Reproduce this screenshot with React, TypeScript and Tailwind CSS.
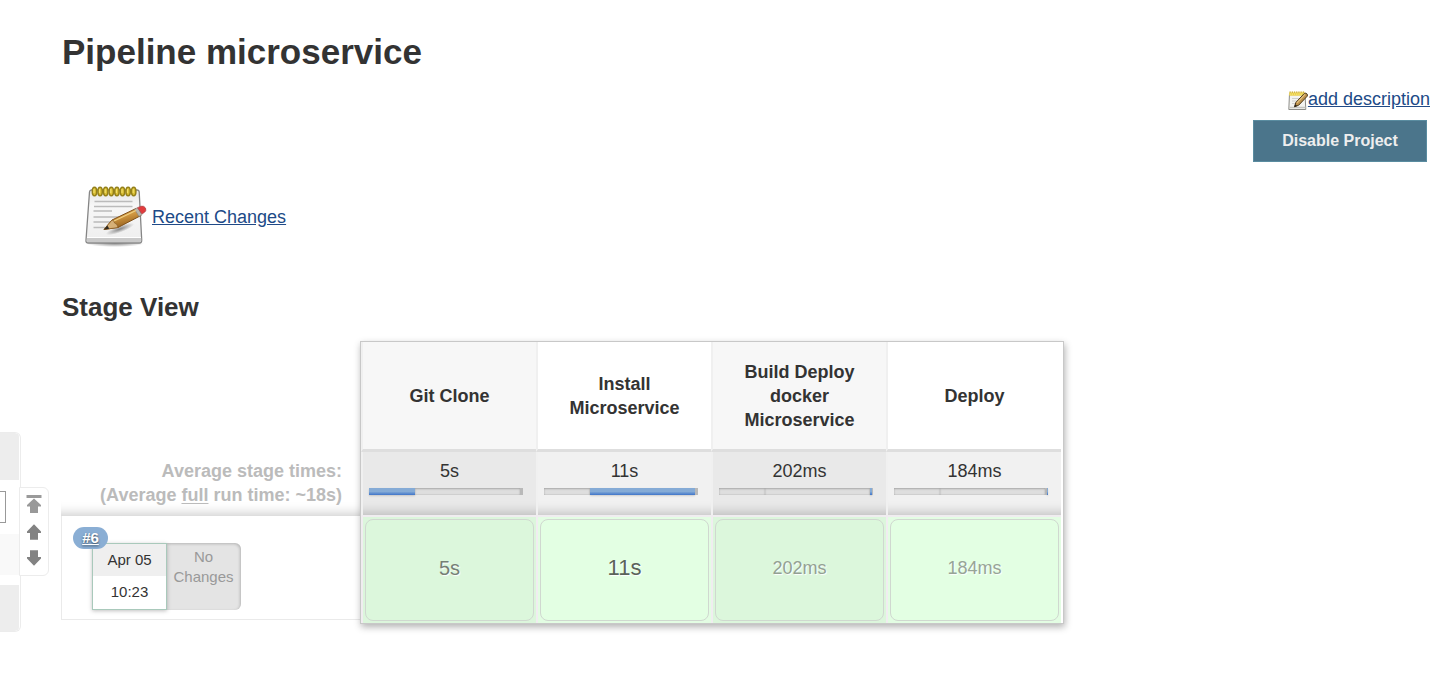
import React from "react";

type Segment = { width: number; kind: "track" | "active" | "cap" };

type Stage = {
  name: string;
  average: string;
  duration: string;
  segments: Segment[];
  durationClass: string;
};

const stages: Stage[] = [
  {
    name: "Git Clone",
    average: "5s",
    duration: "5s",
    durationClass: "text-[20px] text-[#768076]",
    segments: [
      { width: 46, kind: "active" },
      { width: 105, kind: "track" },
      { width: 3, kind: "cap" },
    ],
  },
  {
    name: "Install Microservice",
    average: "11s",
    duration: "11s",
    durationClass: "text-[22px] text-[#5a635a]",
    segments: [
      { width: 46, kind: "track" },
      { width: 105, kind: "active" },
      { width: 3, kind: "cap" },
    ],
  },
  {
    name: "Build Deploy docker Microservice",
    average: "202ms",
    duration: "202ms",
    durationClass: "text-lg text-[#93a093]",
    segments: [
      { width: 46, kind: "track" },
      { width: 105, kind: "track" },
      { width: 2, kind: "active" },
      { width: 1, kind: "cap" },
    ],
  },
  {
    name: "Deploy",
    average: "184ms",
    duration: "184ms",
    durationClass: "text-lg text-[#97a497]",
    segments: [
      { width: 46, kind: "track" },
      { width: 105, kind: "track" },
      { width: 2, kind: "cap" },
      { width: 1, kind: "active" },
    ],
  },
];

const segmentClass = {
  track: "bg-[#dedede] shadow-[inset_0_1px_2px_rgba(0,0,0,0.25),inset_0_-1px_1px_rgba(0,0,0,0.06)]",
  active: "bg-linear-to-b from-[#85abd6] from-50% to-[#3f74c8] shadow-[0_1px_2px_rgba(0,0,0,0.15)]",
  cap: "bg-[#b9b9b9]",
};

function NotepadIcon({ className }: { className: string }) {
  const rings = [0, 1, 2, 3, 4, 5, 6, 7];
  return (
    <svg viewBox="0 0 64 64" className={className} aria-hidden="true">
      <defs>
        <linearGradient id="paper" x1="0" y1="0" x2="0" y2="1">
          <stop offset="0" stopColor="#e6e6e6" />
          <stop offset="0.3" stopColor="#f7f7f7" />
          <stop offset="1" stopColor="#eeeeee" />
        </linearGradient>
        <linearGradient id="wood" x1="0" y1="0" x2="0.4" y2="1">
          <stop offset="0" stopColor="#e5b757" />
          <stop offset="0.5" stopColor="#cf9640" />
          <stop offset="1" stopColor="#8f5b1a" />
        </linearGradient>
        <radialGradient id="shade">
          <stop offset="0" stopColor="#000" stopOpacity="0.45" />
          <stop offset="1" stopColor="#000" stopOpacity="0" />
        </radialGradient>
      </defs>
      <ellipse cx="31" cy="58.5" rx="29" ry="3.5" fill="url(#shade)" />
      <path d="M7.5 5h45.500q2 0 2.200 2l2.500 48q.2 3-2.500 3H4.500Q1.500 58 2 55L5.500 7q.2-2 2-2z" fill="url(#paper)" stroke="#858585" strokeWidth="1.300" />
      <path d="M3 53h54.200l.2 2.500q0 1.500-1.700 1.500H4q-1.500 0-1.300-1.500z" fill="#c9c9c9" />
      <path d="M3 52.500h54" stroke="#fff" strokeWidth="1" />
      <path d="M10.500 16.500h38M10 21.500h38.500M9.500 26h18.500M9.500 32h36M9.500 37h27M9.500 42.500h14" stroke="#bbbbbb" strokeWidth="1.500" />
      {rings.map((n) => (
        <g key={n}>
          <ellipse cx={10.500 + n * 5.6} cy="6.500" rx="2.200" ry="4.200" fill="#dcc034" stroke="#94801a" strokeWidth="1.500" />
          <path d={`M${10 + n * 5.6} 4v4`} stroke="#f6e67c" strokeWidth="0.900" />
        </g>
      ))}
      <ellipse cx="36" cy="44" rx="15" ry="3.500" transform="rotate(-20 36 44)" fill="url(#shade)" />
      <path d="M20 44.500l8-9.500 24-11.500 5 7-23 12z" fill="url(#wood)" stroke="#805018" strokeWidth="1" strokeLinejoin="round" />
      <path d="M20 44.500l8-9.500q3 1 2.500 3 3 .5 3.500 4.500z" fill="#d6b077" stroke="#805018" strokeWidth="0.600" />
      <path d="M20 44.500l3.300-4 2 3.200z" fill="#2f2920" />
      <path d="M50.500 24.200l3-1.500 4.500 7-3 1.700z" fill="#b9b4aa" stroke="#868078" strokeWidth="0.600" />
      <path d="M53.500 22.700l3.500-1.500q3-.6 4.500 1.800 1.200 2.600-1 4.300l-2.500 1.700z" fill="#e23b3d" stroke="#a8474a" strokeWidth="0.700" />
      <path d="M30 36l22-10.500" stroke="#f0d083" strokeWidth="1.200" />
    </svg>
  );
}

function EditNoteIcon({ className }: { className: string }) {
  return (
    <svg viewBox="0 0 20 20" className={className} aria-hidden="true">
      <path d="M1.500 2.500h15.500l.8 16H.8z" fill="#f3f3f0" stroke="#8d8d89" strokeWidth="1" />
      <path d="M1.300 16.500h16.200" stroke="#c4c4c0" strokeWidth="1.500" />
      <path d="M4 7.500h9M4 10h6M4 12.500h4" stroke="#d0d0cc" strokeWidth="1" />
      <path d="M1.200 1.500h16v3.200h-16z" fill="#e9cd45" />
      <path d="M1.500 1.200h15.500" stroke="#c9a51f" strokeWidth="1.200" strokeDasharray="1.300 0.900" />
      <path d="M1.500 3.200h15.500" stroke="#f7e67c" strokeWidth="1.200" strokeDasharray="1.300 0.900" />
      <path d="M6.500 15.800l1.300-4.300 8.600-9.100q1.500-.6 2.500.4 1 1 .3 2.400l-8.500 9z" fill="#bd914b" stroke="#4d3a1c" strokeWidth="1" strokeLinejoin="round" />
      <path d="M9 11.800l8-8.400" stroke="#e8c683" strokeWidth="1.100" />
      <path d="M6.300 16l.9-2.800 2 1.900z" fill="#2a241b" />
    </svg>
  );
}

function ArrowIcon({ variant }: { variant: "top" | "up" | "down" }) {
  if (variant === "top") {
    return (
      <svg viewBox="0 0 16 20" className="h-5 w-4" aria-hidden="true">
        <path d="M0.500 1h15v3h-15z" fill="#9a9a9a" />
        <path d="M8 4.500l7 6.500v1.500h-3V19H4v-6.500H1V11z" fill="#999" />
      </svg>
    );
  }
  return (
    <svg viewBox="0 0 16 16" className={variant === "up" ? "size-4" : "size-4 rotate-180"} aria-hidden="true">
      <path d="M8 0.300l7 7.200v1.500h-3v6.700H4V9H1V7.500z" fill="#828282" />
    </svg>
  );
}

function Sidebar() {
  return (
    <aside className="flex w-[62px] shrink-0 items-start pt-[432px]">
      <div className="w-[21px] overflow-hidden rounded-r-md border-y border-r border-[#ececec]">
        <div className="mr-px h-[47px] rounded-tr bg-[#ededed]" />
        <div className="flex h-[54px] w-1.5 items-center justify-end overflow-hidden">
          <input aria-label="Filter builds" className="h-8 w-40 shrink-0 border border-[#999] bg-white" />
        </div>
        <div className="h-[41px] bg-[#f9f9f9]" />
        <div className="mt-2.5 mr-px h-[46px] rounded-br bg-[#ededed]" />
      </div>
      <nav aria-label="Build history pages" className="-ml-0.5 mt-[55px] flex h-[89px] w-[30px] flex-col items-center gap-2.5 rounded-r-md border border-[#ececec] bg-white pt-1.5">
        <button type="button" aria-label="Newest builds">
          <ArrowIcon variant="top" />
        </button>
        <button type="button" aria-label="Newer builds">
          <ArrowIcon variant="up" />
        </button>
        <button type="button" aria-label="Older builds">
          <ArrowIcon variant="down" />
        </button>
      </nav>
    </aside>
  );
}

function RunColumn() {
  return (
    <div className="flex w-[299px] shrink-0 flex-col justify-end pb-1">
      <div className="px-[18px] pt-2 pb-[9px] text-right text-lg leading-6 font-bold text-[#bbb] shadow-[inset_0_-14px_12px_-12px_rgba(0,0,0,0.22)]">
        <div>Average stage times:</div>
        <div>
          (Average <span className="underline decoration-1 underline-offset-2">full</span> run time: ~18s)
        </div>
      </div>
      <div className="flex h-[104px] items-start border-b border-l border-[#eaeaea] bg-white pt-[27px] pl-[30px]">
        <div className="relative flex h-[67px] text-center text-[15px]">
          <div className="z-10 w-[75px] border border-[#a9c9bb] bg-white text-[#333] shadow-[0_1px_4px_rgba(0,0,0,0.25)]">
            <div className="bg-[#efefef] leading-8">Apr 05</div>
            <div className="leading-8">10:23</div>
          </div>
          <div className="-ml-px w-[75px] rounded-r-md bg-[#e4e4e4] pt-1 leading-5 text-[#999] shadow-[inset_-1px_1px_3px_rgba(0,0,0,0.2)]">
            No
            <br />
            Changes
          </div>
          <a href="#run-6" className="absolute -top-4 -left-[19px] z-20 h-[22px] w-[35px] rounded-full bg-[#8aaed4] leading-[22px] font-bold text-white underline [text-shadow:0_1px_2px_#345]">
            #6
          </a>
        </div>
      </div>
    </div>
  );
}

function StageTable() {
  return (
    <div className="z-10 border border-[#c8c8c8] bg-white pr-0.5 shadow-[1px_3px_7px_rgba(0,0,0,0.3)]">
      <table className="w-[700px] table-fixed border-separate border-spacing-0 text-center text-lg leading-6 text-[#333]">
        <thead>
          <tr>
            {stages.map((stage) => (
              <th key={stage.name} scope="col" className="h-[110px] border-b-3 border-l-2 border-b-[#dedede] border-l-[#f0f0f0] px-7 align-middle font-bold odd:bg-[#f7f7f7]">
                {stage.name}
              </th>
            ))}
          </tr>
        </thead>
        <tbody>
          <tr>
            {stages.map((stage) => (
              <td key={stage.name} className="h-[63px] border-l-2 border-[#f0f0f0] bg-[#f1f1f1] px-1.5 pt-[7px] align-top shadow-[inset_0_-14px_12px_-12px_rgba(0,0,0,0.22)] odd:bg-[#e9e9e9]">
                {stage.average}
                <div className="mt-[5px] flex h-[7px] w-[154px]">
                  {stage.segments.map((segment, i) => (
                    <div key={i} className={segmentClass[segment.kind]} style={{ width: segment.width }} />
                  ))}
                </div>
              </td>
            ))}
          </tr>
          <tr>
            {stages.map((stage) => (
              <td key={stage.name} className="group h-[108px] border-t-2 border-l-2 border-[#f0edf0] bg-[#e3fde3] px-0.5 odd:bg-[#dcf6dc]">
                <div className={`flex h-[102px] items-center justify-center rounded-lg border border-[#d0d8d0] bg-[#e3ffe3] pb-1 group-odd:bg-[#dcf7dc] [text-shadow:1px_1px_1px_#fff] ${stage.durationClass}`}>
                  {stage.duration}
                </div>
              </td>
            ))}
          </tr>
        </tbody>
      </table>
    </div>
  );
}

export default function App() {
  return (
    <div className="flex bg-white font-['Liberation_Sans',Arial,sans-serif] text-[#333]">
      <Sidebar />
      <main className="min-w-0 flex-1 pt-7 pr-[19px]">
        <h1 className="text-[35px] leading-12 font-bold">Pipeline microservice</h1>
        <div className="mt-[11px] flex flex-col items-end">
          <a href="#description" className="flex items-center text-lg leading-6 text-[#204a87] underline">
            <EditNoteIcon className="mt-1 size-5" />
            add description
          </a>
          <button type="button" className="mt-[9px] mr-[3px] h-[42px] w-[174px] border border-[#5a8ca0] bg-[#4b758b] text-base font-bold text-[#eee]">
            Disable Project
          </button>
        </div>
        <a href="#changes" className="mt-[23px] ml-[22px] flex w-fit items-center gap-1 text-lg text-[#204a87]">
          <NotepadIcon className="size-16" />
          <span className="underline">Recent Changes</span>
        </a>
        <h2 className="mt-[42px] text-[26px] leading-8 font-bold">Stage View</h2>
        <section aria-label="Stage View" className="-ml-px mt-[18px] flex w-fit pb-10">
          <RunColumn />
          <StageTable />
        </section>
      </main>
    </div>
  );
}
